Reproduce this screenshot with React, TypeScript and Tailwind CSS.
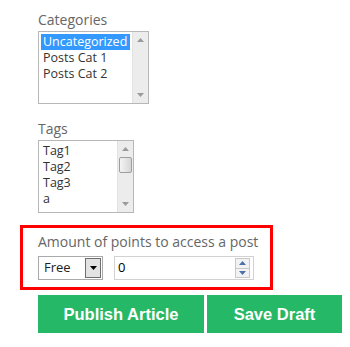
const categories = ['Uncategorized', 'Posts Cat 1', 'Posts Cat 2'];
const tags = ['Tag1', 'Tag2', 'Tag3', 'a'];

function UpArrow({ className = '' }: { className?: string }) {
  return (
    <svg width="7" height="4" viewBox="0 0 7 4" className={className}>
      <path d="M3.5 0 L7 4 L0 4 Z" fill="currentColor" />
    </svg>
  );
}

function DownArrow({ className = '' }: { className?: string }) {
  return (
    <svg width="7" height="4" viewBox="0 0 7 4" className={className}>
      <path d="M0 0 L7 0 L3.5 4 Z" fill="currentColor" />
    </svg>
  );
}

// fake listbox scrollbar, optional thumb
function Scrollbar({ thumb }: { thumb?: boolean }) {
  return (
    <div className="flex flex-col w-[16px] h-full bg-[#ececec] border-l border-[#e2e2e2]">
      <div className="h-[16px] flex items-center justify-center text-[#9a9a9a]">
        <UpArrow />
      </div>
      <div className="flex-1">
        {thumb && (
          <div className="mx-px h-[16px] rounded-[2px] border border-[#9d9d9d] bg-gradient-to-r from-[#f4f4f4] to-[#d6d6d6]" />
        )}
      </div>
      <div className="h-[16px] flex items-center justify-center text-[#9a9a9a]">
        <DownArrow />
      </div>
    </div>
  );
}

export default function App() {
  return (
    <div className="w-[350px] h-[347px] bg-white font-['Open_Sans',sans-serif] pt-[10px]">
      {/* Categories */}
      <div className="pl-[38px]">
        <div className="h-[21px] text-[14px] leading-[20px] text-[#666]">Categories</div>
        <div className="flex w-[111px] h-[73px] border border-[#b7b7b7] bg-white">
          <div className="flex-1 pt-[2px] pl-[2px] pr-[2px]">
            {categories.map((c, i) => (
              <div
                key={c}
                className={`h-[16px] pl-[2px] text-[12.5px] leading-[16px] ${
                  i === 0 ? 'bg-[#3399ff] text-white' : 'text-[#333]'
                }`}
              >
                {c}
              </div>
            ))}
          </div>
          <Scrollbar />
        </div>
      </div>

      {/* Tags */}
      <div className="pl-[38px] mt-[15px]">
        <div className="h-[21px] text-[14px] leading-[20px] text-[#666]">Tags</div>
        <div className="flex w-[96px] h-[73px] border border-[#b7b7b7] bg-white overflow-hidden">
          <div className="flex-1 pt-[2px] pl-[4px] overflow-hidden">
            {tags.map((t) => (
              <div key={t} className="h-[16px] text-[12.5px] leading-[16px] text-[#333]">
                {t}
              </div>
            ))}
          </div>
          <Scrollbar thumb />
        </div>
      </div>

      {/* Points box */}
      <div className="ml-[20px] mt-[12px] w-[253px] h-[65px] border-[3px] border-[#ff0000] pl-[15px] pt-[4px]">
        <div className="h-[20px] text-[14px] leading-[20px] text-[#666] whitespace-nowrap">Amount of points to access a post</div>
        <div className="flex items-center gap-[11px] mt-[4px]">
          <div className="flex items-center w-[65px] h-[24px] border border-[#aaa] bg-white">
            <span className="flex-1 pl-[5px] text-[13px] text-[#222]">Free</span>
            <div className="w-[16px] h-[20px] mr-[1px] border border-[#6f6f6f] bg-[#e3e3e3] flex items-center justify-center text-black">
              <DownArrow />
            </div>
          </div>
          <div className="flex items-center w-[140px] h-[24px] border border-[#d2d2d2] bg-white">
            <span className="flex-1 pl-[3px] text-[13px] text-black">0</span>
            <div className="flex flex-col w-[15px] h-[20px] mr-[3px] border border-[#c8c8c8]">
              <div className="flex-1 flex items-center justify-center bg-[#f2f2f2] text-[#4d6fae] border-b border-[#c8c8c8]">
                <UpArrow />
              </div>
              <div className="flex-1 flex items-center justify-center bg-[#f2f2f2] text-[#4d6fae]">
                <DownArrow />
              </div>
            </div>
          </div>
        </div>
      </div>

      {/* Buttons */}
      <div className="flex gap-[3px] ml-[38px] mt-[5px]">
        <button className="w-[166px] h-[38px] bg-[#25b967] text-white font-['Liberation_Sans',sans-serif] font-bold text-[16.5px]">
          Publish Article
        </button>
        <button className="w-[135px] h-[38px] bg-[#25b967] text-white font-['Liberation_Sans',sans-serif] font-bold text-[16.5px]">
          Save Draft
        </button>
      </div>
    </div>
  );
}
